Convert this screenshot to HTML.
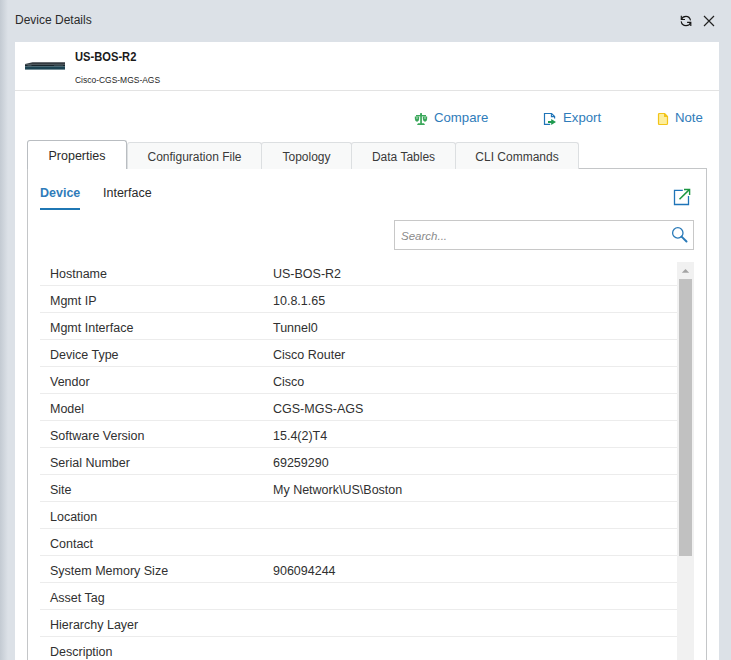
<!DOCTYPE html>
<html><head><meta charset="utf-8">
<style>
*{box-sizing:border-box}
html,body{margin:0;padding:0;width:731px;height:660px;overflow:hidden}
body{background:#dce1e7;font-family:"Liberation Sans",sans-serif;color:#333;position:relative}
.lg{position:absolute;left:0;top:0;width:8px;height:660px;background:linear-gradient(to right,#c3cad2,#dce1e7)}
.abs{position:absolute;white-space:nowrap}
.title{left:15px;top:13px;font-size:12px;line-height:15px;color:#2b2b2b}
.panel{position:absolute;left:15px;top:42px;width:704px;height:640px;background:#fff}
.sep{position:absolute;left:15px;top:90px;width:704px;height:1px;background:#e3e3e3}
.name{left:75px;top:50px;font-size:12px;font-weight:bold;line-height:15px;color:#1a1a1a;transform:scaleX(0.93);transform-origin:0 0}
.model{left:75px;top:74px;font-size:9px;line-height:12px;color:#1e1e1e;transform:scaleX(0.94);transform-origin:0 0}
.tb{font-size:13.2px;line-height:16px;color:#2f7cba;top:110px}
.tab{position:absolute;top:142px;height:27px;background:#f8f9f9;border:1px solid #dcdfe1;border-bottom:none;border-radius:3px 3px 0 0;font-size:12px;line-height:29px;text-align:center;color:#3a3a3a}
.tab.act{top:140px;height:29px;line-height:31px;font-size:12.5px;color:#2a2a2a;background:#fff;border-color:#b9bdc1;z-index:2}
.content{position:absolute;left:27px;top:168px;width:680px;height:520px;border:1px solid #c4c6c8;background:#fff}
.sub{font-size:12.5px;line-height:15px;top:186px}
.row{position:absolute;left:40px;width:637px;height:27px;border-bottom:1px solid #ececec}
.row span{position:absolute;top:8px;font-size:12.5px;line-height:15px;color:#303030;white-space:nowrap}
.row .k{left:10px}
.row .v{left:233px}
</style></head><body>
<div class="lg"></div>
<div class="abs title">Device Details</div>
<!-- refresh icon -->
<svg class="abs" style="left:677px;top:12px" width="18" height="18" viewBox="0 0 18 18">
 <g fill="none" stroke="#161616" stroke-width="1.15">
 <path d="M4.4 7.3 C5.2 5.2 7 4.3 9 4.3 C11.5 4.3 13 6 13.5 8.3"/>
 <path d="M4.3 3.8 L4.3 7.5 L8 7.5"/>
 <path d="M4.2 9.3 C4.6 12 6.5 13.6 9 13.6 C11 13.6 12.8 12.6 13.6 10.7"/>
 <path d="M10.1 10.3 L13.8 10.3 L13.8 14"/>
 </g>
</svg>
<svg class="abs" style="left:703px;top:15px" width="12" height="12" viewBox="0 0 12 12">
 <path d="M1 1 L11 11 M11 1 L1 11" stroke="#222" stroke-width="1.2"/>
</svg>
<div class="panel"></div>
<!-- device image -->
<svg class="abs" style="left:24px;top:60px" width="44" height="12" viewBox="0 0 44 12">
 <path d="M8.5 2.2 L41 2.2 L41 4.3 L1 4.3 L1 4.1 Z" fill="#343a40"/>
 <rect x="1" y="4.3" width="40" height="2" fill="#19252c"/>
 <rect x="1" y="6.3" width="40" height="3.3" fill="#1c4352"/>
 <rect x="3.5" y="5.4" width="4" height="1.2" fill="#50656f"/>
 <rect x="30" y="4.6" width="9" height="1.2" fill="#3e4c54"/>
</svg>
<div class="abs name">US-BOS-R2</div>
<div class="abs model">Cisco-CGS-MGS-AGS</div>
<div class="sep"></div>
<!-- toolbar -->
<svg class="abs" style="left:408px;top:106px" width="28" height="24" viewBox="0 0 28 24">
 <g fill="#3aa75a">
 <rect x="12.2" y="7.6" width="1.7" height="10.5"/>
 <circle cx="13.05" cy="7.9" r="1"/>
 <rect x="8" y="9" width="10" height="1.35"/>
 <path d="M6.8 10.6 L11.2 10.6 Q11.4 15.8 9 15.8 Q6.6 15.8 6.8 10.6 Z"/>
 <path d="M14.8 10.6 L19.2 10.6 Q19.4 15.8 17 15.8 Q14.6 15.8 14.8 10.6 Z"/>
 <path d="M9 19 L17 19 L16 17.2 L10 17.2 Z"/>
 </g>
 <circle cx="9" cy="12" r="0.8" fill="#cfe9d6"/>
 <circle cx="17" cy="12" r="0.8" fill="#cfe9d6"/>
</svg>
<div class="abs tb" style="left:434px">Compare</div>
<svg class="abs" style="left:540px;top:109px" width="20" height="20" viewBox="0 0 20 20">
 <path d="M14.6 9.4 L14.6 7.6 L11.6 4.5 L4.5 4.5 L4.5 15.3 L10.2 15.3" fill="none" stroke="#1f74b8" stroke-width="1.2"/>
 <path d="M11.4 4.5 L11.4 7.6 L14.6 7.6" fill="none" stroke="#1f74b8" stroke-width="1.1"/>
 <path d="M8 11.9 L11.2 11.9 L11.2 10 L16 12.9 L11.2 15.9 L11.2 13.9 L8 13.9 Z" fill="#1f9a4f"/>
</svg>
<div class="abs tb" style="left:563px">Export</div>
<svg class="abs" style="left:657px;top:112px" width="12" height="14" viewBox="0 0 12 14">
 <path d="M2.5 1.5 L7.5 1.5 L10.5 4.5 L10.5 11.5 Q10.5 12.5 9.5 12.5 L2.5 12.5 Q1.5 12.5 1.5 11.5 L1.5 2.5 Q1.5 1.5 2.5 1.5 Z" fill="#fdee9c" stroke="#f2c419" stroke-width="1.2" stroke-linejoin="round"/>
 <path d="M7 1 L11 5 L7 5 Z" fill="#f2c419"/>
</svg>
<div class="abs tb" style="left:675px">Note</div>
<!-- tabs -->
<div class="content"></div>
<div class="tab act" style="left:27px;width:100px">Properties</div>
<div class="tab" style="left:127px;width:135px">Configuration File</div>
<div class="tab" style="left:261px;width:91px">Topology</div>
<div class="tab" style="left:351px;width:105px">Data Tables</div>
<div class="tab" style="left:455px;width:124px">CLI Commands</div>
<div class="abs sub" style="left:40px;color:#2f7cba;font-weight:bold">Device</div>
<div class="abs" style="left:40px;top:208px;width:40px;height:2px;background:#1f77b4"></div>
<div class="abs sub" style="left:103px;color:#2a2a2a">Interface</div>
<svg class="abs" style="left:672px;top:187px" width="20" height="20" viewBox="0 0 20 20">
 <path d="M10.8 3.3 L2.5 3.3 L2.5 17.5 L16.5 17.5 L16.5 9" fill="none" stroke="#1f74b8" stroke-width="1.3"/>
 <path d="M7.5 12.3 L17.3 2.6" stroke="#1b9640" stroke-width="1.5"/>
 <path d="M12 2.5 L17.6 2.5 L17.6 8" fill="none" stroke="#1b9640" stroke-width="1.4"/>
</svg>
<div class="abs" style="left:394px;top:220px;width:300px;height:30px;border:1px solid #c8c8c8;background:#fff"></div>
<div class="abs" style="left:401px;top:229px;font-size:11.5px;line-height:15px;font-style:italic;color:#8a8a8a">Search...</div>
<svg class="abs" style="left:670px;top:225px" width="20" height="20" viewBox="0 0 20 20">
 <circle cx="7.8" cy="7.9" r="5.2" fill="none" stroke="#2a7ab8" stroke-width="1.3"/>
 <path d="M11.6 11.6 L16.5 16.5" stroke="#2a7ab8" stroke-width="2" stroke-linecap="round"/>
</svg>
<!-- table -->
<div class="row" style="top:259px"><span class="k">Hostname</span><span class="v">US-BOS-R2</span></div>
<div class="row" style="top:286px"><span class="k">Mgmt IP</span><span class="v">10.8.1.65</span></div>
<div class="row" style="top:313px"><span class="k">Mgmt Interface</span><span class="v">Tunnel0</span></div>
<div class="row" style="top:340px"><span class="k">Device Type</span><span class="v">Cisco Router</span></div>
<div class="row" style="top:367px"><span class="k">Vendor</span><span class="v">Cisco</span></div>
<div class="row" style="top:394px"><span class="k">Model</span><span class="v">CGS-MGS-AGS</span></div>
<div class="row" style="top:421px"><span class="k">Software Version</span><span class="v">15.4(2)T4</span></div>
<div class="row" style="top:448px"><span class="k">Serial Number</span><span class="v">69259290</span></div>
<div class="row" style="top:475px"><span class="k">Site</span><span class="v">My Network\US\Boston</span></div>
<div class="row" style="top:502px"><span class="k">Location</span></div>
<div class="row" style="top:529px"><span class="k">Contact</span></div>
<div class="row" style="top:556px"><span class="k">System Memory Size</span><span class="v">906094244</span></div>
<div class="row" style="top:583px"><span class="k">Asset Tag</span></div>
<div class="row" style="top:610px"><span class="k">Hierarchy Layer</span></div>
<div class="row" style="top:637px"><span class="k">Description</span></div>
<!-- scrollbar -->
<div class="abs" style="left:677px;top:262px;width:17px;height:400px;background:#f1f1f1"></div>
<svg class="abs" style="left:677px;top:262px" width="17" height="14" viewBox="0 0 17 14">
 <path d="M4.8 10.8 L8.5 6.9 L12.2 10.8 Z" fill="#a3a3a3"/>
</svg>
<div class="abs" style="left:679px;top:279px;width:13px;height:277px;background:#c1c1c1"></div>
</body></html>
